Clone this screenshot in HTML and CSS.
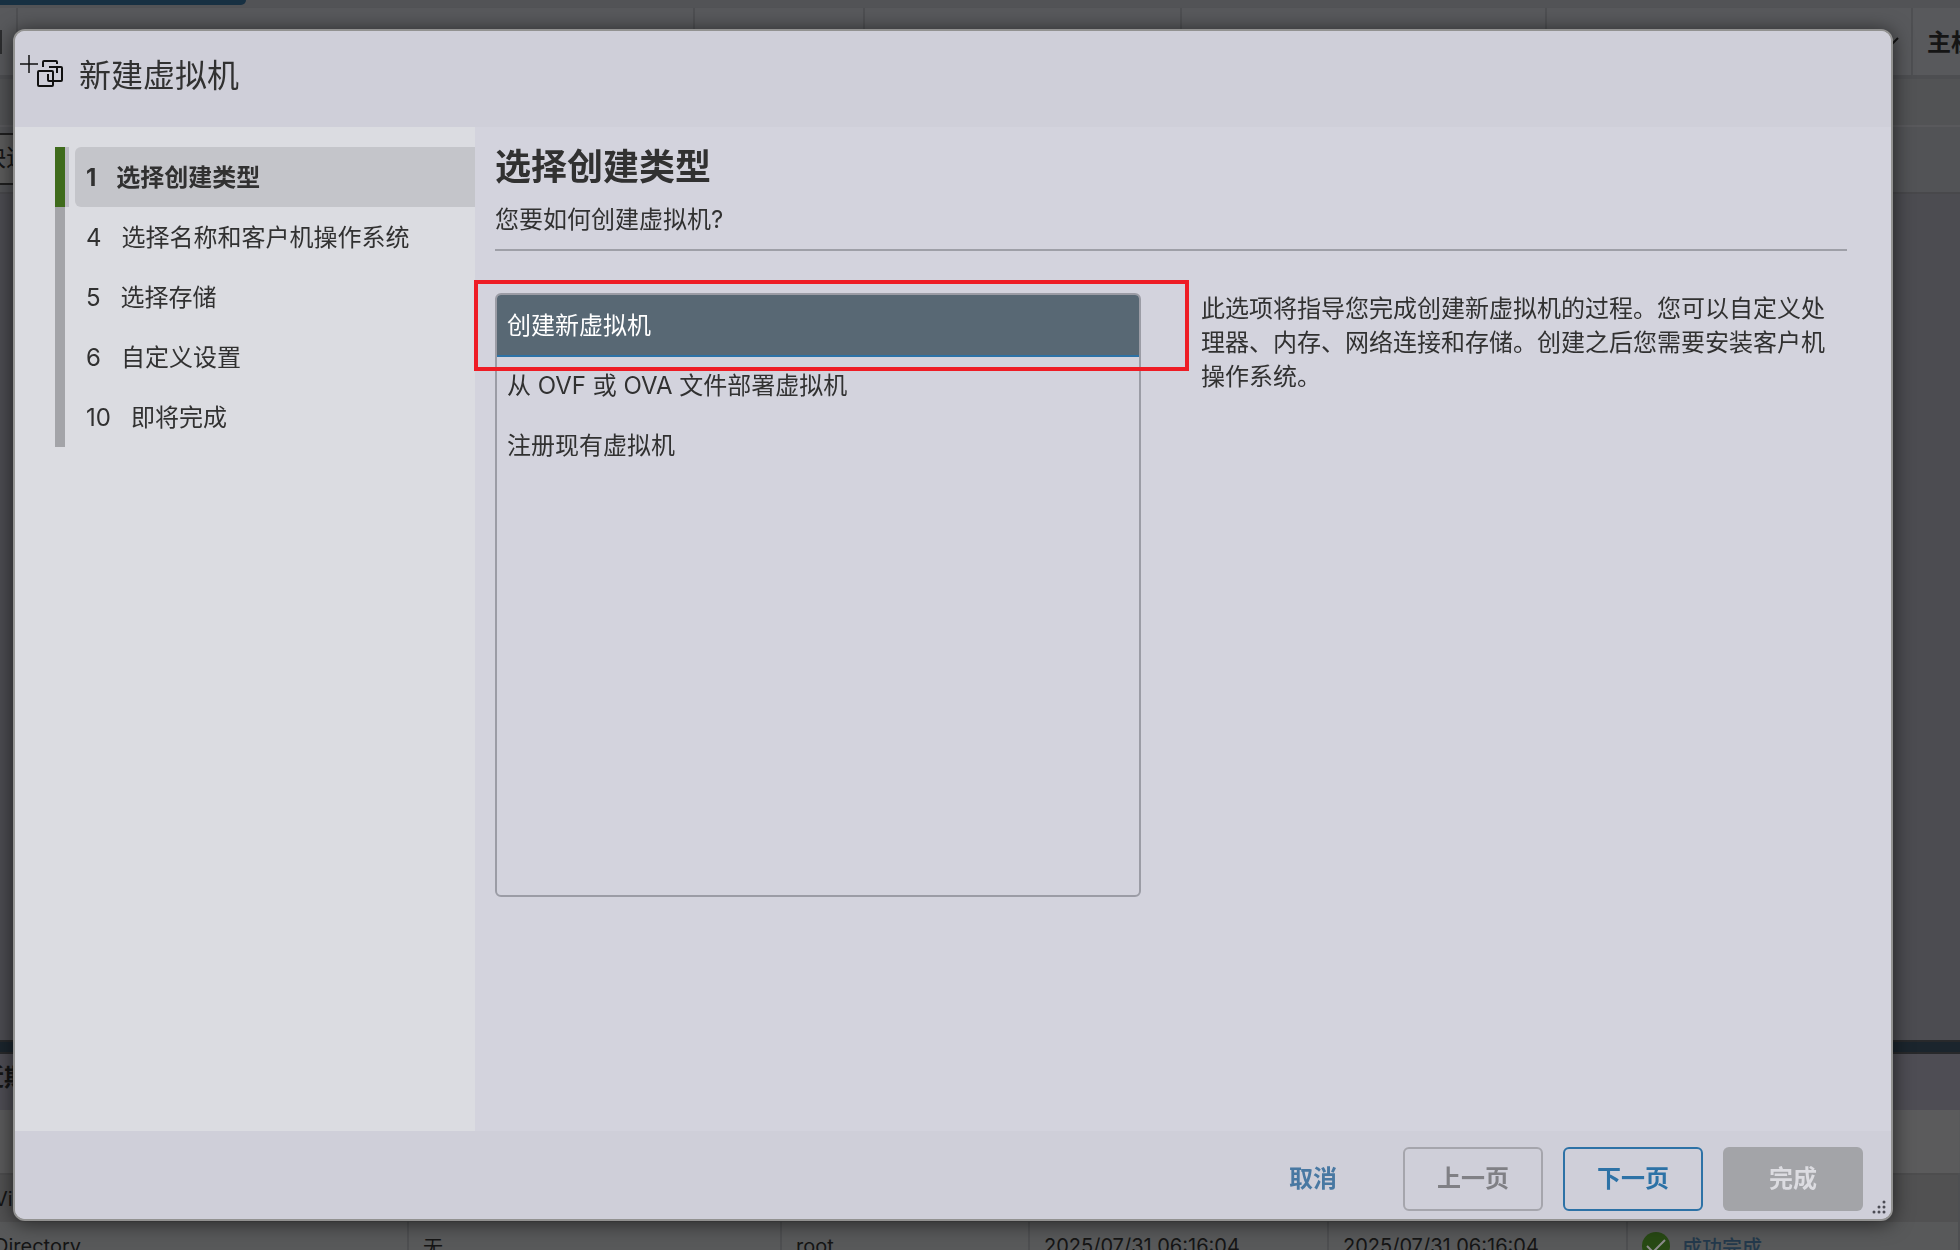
FILE: index.html
```html
<!DOCTYPE html>
<html lang="zh-CN">
<head>
  <meta charset="UTF-8" />
  <meta name="viewport" content="width=device-width, initial-scale=1.0"/>
  <title>新建虚拟机</title>
  <link rel="stylesheet" href="styles.css">
</head>
<body>
  <!-- page behind the dialog -->
  <div class="app">
    <div class="top-strip"><div class="top-tab"></div></div>
    <div class="grid-head">
      <div class="col col-check"><span class="checkbox"></span></div>
      <div class="col col-name"></div>
      <div class="col col-status"></div>
      <div class="col col-used"></div>
      <div class="col col-os"></div>
      <div class="col col-host">
        <svg class="caret" width="16" height="10" viewBox="0 0 16 10"><path d="M1 1l7 7 7-7" fill="none" stroke="#151515" stroke-width="2"/></svg>
      </div>
      <div class="col col-last">主机</div>
    </div>
    <div class="grid-row"></div>
    <div class="filter-row"><span class="filter">快速</span></div>
    <div class="workspace"></div>
    <div class="divider"></div>
    <div class="tasks-title">近期任务</div>
    <div class="tasks-wrap">
      <table class="tasks">
        <thead>
          <tr><th class="t-task"></th><th class="t-target"></th><th class="t-user"></th><th class="t-date"></th><th class="t-date"></th><th></th></tr>
        </thead>
        <tbody>
          <tr><td>Virtual</td><td></td><td></td><td></td><td></td><td></td></tr>
          <tr>
            <td>Directory</td>
            <td>无</td>
            <td>root</td>
            <td>2025/07/31 06:16:04</td>
            <td>2025/07/31 06:16:04</td>
            <td>
              <div class="result">
                <svg width="28" height="28" viewBox="0 0 28 28"><circle cx="14" cy="14" r="14" fill="#284a14"/><path d="M5 14l6 6L23 8" fill="none" stroke="#8d8d8d" stroke-width="2"/></svg>
                <a href="#">成功完成</a>
              </div>
            </td>
          </tr>
        </tbody>
      </table>
    </div>
  </div>

  <div class="modal">
    <div class="dialog" role="dialog" aria-labelledby="dialog-title">
      <header class="dialog-header">
        <svg class="vm-icon" width="44" height="34" viewBox="0 0 44 34" fill="none" stroke="#111" stroke-width="1.5">
          <path d="M1 10h18M10 1v18"/>
          <path d="M24 13V8q0-1 1-1h12q1 0 1 1v2" stroke-width="2"/>
          <rect x="19" y="17" width="15" height="15" rx="1" stroke-width="2"/>
          <path d="M29 20v6q0 1 1 1h12q1 0 1-1V14q0-1-1-1H30M38 13v6" stroke-width="2"/>
        </svg>
        <h1 id="dialog-title">新建虚拟机</h1>
      </header>

      <div class="dialog-body">
        <nav class="sidebar">
          <ol class="steps">
            <li class="step active"><button type="button"><span>1</span>选择创建类型</button></li>
            <li class="step"><button type="button"><span>4</span>选择名称和客户机操作系统</button></li>
            <li class="step"><button type="button"><span>5</span>选择存储</button></li>
            <li class="step"><button type="button"><span>6</span>自定义设置</button></li>
            <li class="step"><button type="button"><span>10</span>即将完成</button></li>
          </ol>
        </nav>

        <main class="content">
          <h2>选择创建类型</h2>
          <p class="subtitle">您要如何创建虚拟机?</p>
          <div class="choice">
            <div class="list-wrap">
              <ul class="list">
                <li><button type="button" class="option selected">创建新虚拟机</button></li>
                <li><button type="button" class="option">从 OVF 或 OVA 文件部署虚拟机</button></li>
                <li><button type="button" class="option">注册现有虚拟机</button></li>
              </ul>
              <div class="highlight"></div>
            </div>
            <p class="description">此选项将指导您完成创建新虚拟机的过程。您可以自定义处理器、内存、网络连接和存储。创建之后您需要安装客户机操作系统。</p>
          </div>
        </main>
      </div>

      <footer class="dialog-footer">
        <button type="button" class="btn btn-link">取消</button>
        <button type="button" class="btn btn-back" disabled>上一页</button>
        <button type="button" class="btn btn-next">下一页</button>
        <button type="button" class="btn btn-finish" disabled>完成</button>
      </footer>

      <svg class="resize" width="16" height="16" viewBox="0 0 16 16" fill="#4c4c54">
        <circle cx="13" cy="3" r="1.5"/>
        <circle cx="8" cy="8" r="1.5"/><circle cx="13" cy="8" r="1.5"/>
        <circle cx="3" cy="13" r="1.5"/><circle cx="8" cy="13" r="1.5"/><circle cx="13" cy="13" r="1.5"/>
      </svg>
    </div>
  </div>
</body>
</html>
```
FILE: styles.css
```css
* {
  box-sizing: border-box;
}

body {
  margin: 0;
  background: #4c4c51;
  font-family: Inter, "Noto Sans CJK SC", sans-serif;
  font-size: 24px;
  color: #313131;
}

h1, h2, p, ul, ol {
  margin: 0;
  padding: 0;
}

ul, ol {
  list-style: none;
}

button {
  font: inherit;
  color: inherit;
  cursor: pointer;
}

/* page behind */
.app {
  height: 100vh;
  overflow: hidden;
  display: flex;
  flex-direction: column;
  color: #151515;
}

.top-strip {
  flex: 0 0 8px;
  background: #525356;
}

.top-tab {
  width: 246px;
  height: 5px;
  background: #173042;
  border-bottom-right-radius: 6px;
}

.grid-head {
  flex: 0 0 71px;
  display: flex;
  align-items: stretch;
  background: #58595c;
  border-bottom: 4px solid #4d4e51;
}

.col {
  display: flex;
  align-items: center;
  border-right: 2px solid #4e4f52;
}

.col-check { width: 18px; }
.col-name { width: 677px; }
.col-status { width: 170px; }
.col-used { width: 317px; }
.col-os { width: 365px; }

.col-host {
  width: 366px;
  justify-content: flex-end;
  padding-right: 12px;
}

.col-last {
  flex: 1;
  padding: 0 0 2px 14px;
  border: none;
  font-weight: bold;
  white-space: nowrap;
  overflow: hidden;
}

.checkbox {
  width: 2px;
  height: 24px;
  background: #2c2d2f;
}

.grid-row {
  flex: 0 0 48px;
  background: #525355;
  border-bottom: 2px solid #59595c;
}

.filter-row {
  flex: 0 0 67px;
  padding-top: 6px;
  background: #525356;
  border-bottom: 2px solid #48484b;
}

.filter {
  display: block;
  width: 200px;
  height: 52px;
  margin-left: -20px;
  line-height: 46px;
  background: #5c5c5c;
  border: 2px solid #1f1f1f;
}

.workspace {
  flex: 1;
}

.divider {
  flex: 0 0 14px;
  background: #1b252d;
  border-top: 2px solid #28292b;
  border-bottom: 2px solid #28292b;
}

.tasks-title {
  flex: 0 0 56px;
  margin-left: -20px;
  line-height: 48px;
  background: #4e4d54;
  font-weight: bold;
}

.tasks-wrap {
  flex: 0 0 140px;
  overflow: hidden;
}

.tasks {
  width: calc(100% + 20px);
  margin-left: -20px;
  table-layout: fixed;
  border-collapse: collapse;
  font-size: 20px;
  background: #58595a;
}

.tasks thead tr {
  height: 64px;
  background: #5b5b5c;
  border-bottom: 2px solid #4d4d4e;
}

.tasks th,
.tasks td {
  padding: 0 0 0 14px;
  text-align: left;
}

.tasks tbody tr {
  height: 48px;
}

.tasks tbody tr:first-child {
  background: #515152;
}

.tasks td {
  border-right: 2px solid #4e4f51;
}

.t-task { width: 428px; }
.t-target { width: 373px; }
.t-user { width: 248px; }
.t-date { width: 299px; }

.result {
  display: flex;
  align-items: center;
  gap: 12px;
}

.result a {
  color: #24394c;
  font-weight: 500;
  text-decoration: none;
}

/* dialog */
.modal {
  position: fixed;
  inset: 0;
  display: flex;
  padding: 29px 67px 29px 13px;
}

.dialog {
  position: relative;
  flex: 1;
  display: flex;
  flex-direction: column;
  background: #d3d3dd;
  border: 2px solid #929291;
  border-radius: 12px;
  overflow: hidden;
  box-shadow: 0 2px 20px rgba(0, 0, 0, 0.6);
}

.dialog-header {
  display: flex;
  gap: 16px;
  height: 96px;
  padding: 23px 4px;
  background: #cfcfd9;
}

.dialog-header h1 {
  font-size: 32px;
  font-weight: normal;
  line-height: 44px;
}

.dialog-body {
  flex: 1;
  display: flex;
}

.sidebar {
  flex: 0 0 460px;
  padding: 20px 0 0 40px;
  background: #dbdce1;
}

.step {
  height: 60px;
  padding-left: 10px;
  border-left: 10px solid #a3a4a8;
}

.step button {
  display: block;
  width: 100%;
  height: 60px;
  padding: 0 0 4px 11px;
  border: none;
  border-radius: 6px 0 0 6px;
  background: none;
  text-align: left;
}

.step span {
  margin-right: 20px;
}

.step.active {
  border-left-color: #3f6b1c;
  box-shadow: inset 4px 0 #bcbbc4;
}

.step.active button {
  background: #c4c5ca;
  font-weight: bold;
}

.content {
  flex: 1;
  display: flex;
  flex-direction: column;
  padding: 16px 44px 0 20px;
}

.content h2 {
  font-size: 36px;
  line-height: 48px;
}

.subtitle {
  padding: 11px 0;
  line-height: 36px;
  border-bottom: 2px solid #9e9fa7;
}

.choice {
  display: grid;
  grid-template-columns: 1fr 1fr;
  gap: 60px;
  margin-top: 42px;
}

.list-wrap {
  position: relative;
}

.list {
  height: 604px;
  border: 2px solid #9b9ca5;
  border-radius: 6px;
}

.option {
  display: block;
  width: 100%;
  height: 60px;
  padding: 0 10px 4px;
  border: none;
  background: none;
  text-align: left;
}

.option.selected {
  background: #586874;
  color: #fff;
  border-radius: 4px 4px 0 0;
  box-shadow: 0 2px #2d72a6;
}

/* callout frame around the first option */
.highlight {
  position: absolute;
  top: -13px;
  left: -21px;
  right: -48px;
  height: 91px;
  border: 4px solid #ee1c25;
  pointer-events: none;
}

.description {
  margin-top: -1px;
  line-height: 34px;
}

.dialog-footer {
  display: flex;
  justify-content: flex-end;
  gap: 20px;
  height: 88px;
  padding: 16px 28px 8px;
  background: #cfcfd9;
}

.btn {
  width: 140px;
  height: 64px;
  padding: 0 0 6px;
  border: 2px solid transparent;
  border-radius: 6px;
  background: none;
  font-weight: bold;
}

.btn:disabled {
  cursor: not-allowed;
}

.btn-link {
  color: #4878a2;
}

.btn-back {
  border-color: #a5a5ac;
  color: #808085;
}

.btn-next {
  border-color: #2d72a6;
  color: #2d72a6;
}

.btn-finish {
  background: #a3a4a8;
  color: #dcdce1;
}

.resize {
  position: absolute;
  right: 4px;
  bottom: 4px;
}
```
